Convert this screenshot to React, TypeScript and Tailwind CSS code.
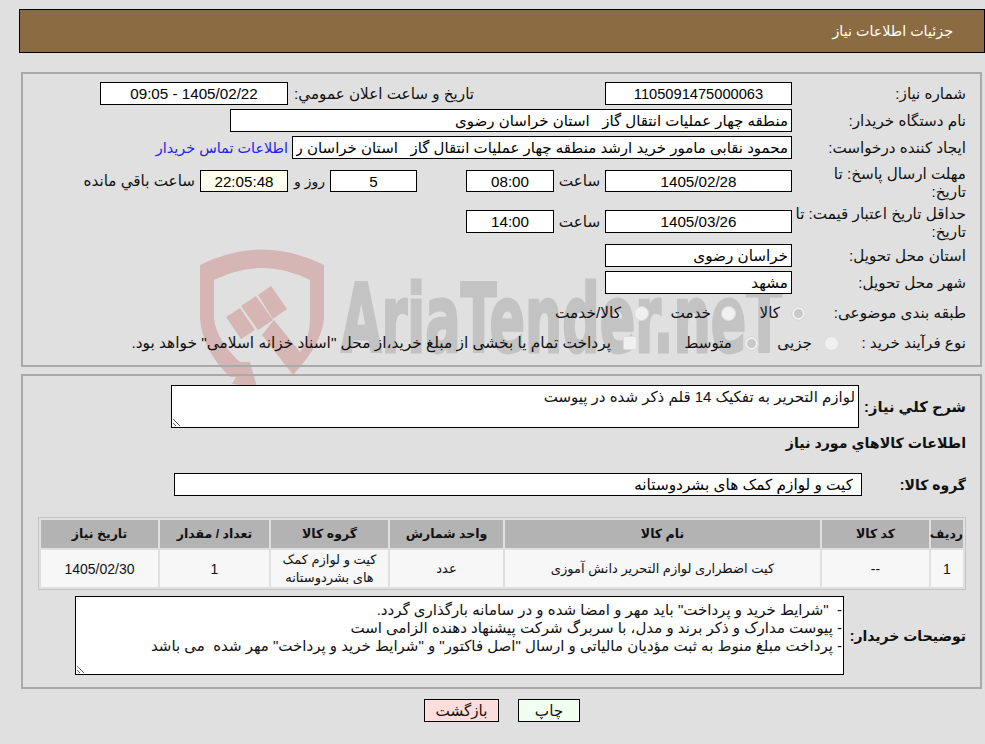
const inputCls = "h-[23px] border border-black bg-white px-[3px] text-black outline-none shrink-0";
const th = "bg-[#b3b3b3] h-[28px] p-0 text-center font-bold text-[12.5px]";
const td = "bg-[#f7f7f7] h-[37px] p-0 text-center leading-[18px] text-[13px]";
const tdNum = "bg-[#f7f7f7] h-[37px] p-0 text-center text-[14px]";

function Field({ value, className, center }: { value: string; className: string; center?: boolean }) {
  return <input readOnly value={value} className={`${inputCls} ${center ? "text-center" : "text-right"} ${className}`} />;
}

function Radio({ checked, className }: { checked?: boolean; className: string }) {
  return (
    <input
      type="radio"
      disabled
      checked={!!checked}
      readOnly
      className={`w-[15px] h-[15px] shrink-0 appearance-none rounded-full border border-[#dcdcdc] bg-[#f0f0f0] checked:bg-[#c9c9c9] checked:shadow-[inset_0_0_0_2px_#f0f0f0] ${className}`}
    />
  );
}

function Watermark() {
  return (
    <svg className="absolute left-0 top-0 pointer-events-none" width="985" height="744" viewBox="0 0 985 744">
      <g fill="#d6b5b5">
        <path
          fillRule="evenodd"
          d="M200 265 Q262 234 324 265 L324 318 Q322 344 293 375 L262 335 L274 320 L300 352 Q310 340 310 318 L310 280 Q262 256 214 280 L214 318 Q216 340 240 362 L250 362 L257 387 L232 384 L236 377 L230 377 Q202 350 200 318 Z"
        />
        <path d="M226 317 L240 308 L255 330 L241 339 Z" />
        <path d="M241 306 L256 296 L273 320 L258 330 Z" />
        <path d="M258 295 L271 286 L287 309 L273 319 Z" />
      </g>
      <text
        x="341"
        y="352"
        direction="ltr"
        textLength="441"
        lengthAdjust="spacingAndGlyphs"
        fill="#c3c3c3"
        stroke="#c3c3c3"
        strokeWidth="3"
        fontSize="95"
        fontWeight="700"
        fontFamily="DejaVu Sans, sans-serif"
      >
        AriaTender.neT
      </text>
    </svg>
  );
}

export default function App() {
  return (
    <div
      dir="rtl"
      className="relative w-[985px] h-[744px] overflow-hidden bg-[#e0e0e0] pt-[9px] text-[15.2px] leading-[18px] text-[#111] font-['Liberation_Sans','DejaVu_Sans',sans-serif]"
    >
      <Watermark />
      <div className="relative">
        <div className="ml-[19px] h-[44px] border border-black bg-[#8b6b42] pr-[31px] flex items-center text-white text-[14.3px]">
          جزئیات اطلاعات نیاز
        </div>

        <div className="ml-[21px] mr-[3px] mt-[19px] h-[295px] border-2 border-[#a9a9a9] pt-[8px] pr-[14px]">
          <div className="flex items-center h-[23px]">
            <div className="w-[174px] shrink-0">شماره نیاز:</div>
            <Field value="1105091475000063" center className="w-[187px] text-[14.67px]" />
            <div className="w-[186px] mr-[131px] shrink-0 whitespace-nowrap">تاريخ و ساعت اعلان عمومي:</div>
            <Field value="1405/02/22 - 09:05" center className="w-[188px]" />
          </div>
          <div className="flex items-center h-[23px] mt-[4px]">
            <div className="w-[174px] shrink-0">نام دستگاه خریدار:</div>
            <Field value="منطقه چهار عملیات انتقال گاز   استان خراسان رضوی" className="w-[562px] text-[15px]" />
          </div>
          <div className="flex items-center h-[23px] mt-[4px]">
            <div className="w-[174px] shrink-0">ایجاد کننده درخواست:</div>
            <Field value="محمود نقابی مامور خرید ارشد منطقه چهار عملیات انتقال گاز   استان خراسان رضوی" className="w-[500px] text-[15px]" />
            <a className="mr-[4px] text-[#2222ee] whitespace-nowrap text-[14.4px]">اطلاعات تماس خریدار</a>
          </div>
          <div className="flex items-center h-[22px] mt-[11px]">
            <div className="w-[174px] shrink-0 pl-[20px] pt-[3px]">مهلت ارسال پاسخ: تا تاریخ:</div>
            <Field value="1405/02/28" center className="w-[187px] !h-[22px]" />
            <div className="w-[51px] text-center shrink-0">ساعت</div>
            <Field value="08:00" center className="w-[88px] !h-[22px]" />
            <Field value="5" center className="w-[87px] mr-[49px] !h-[22px]" />
            <div className="w-[42px] pr-[5px] shrink-0 text-[14px]">روز و</div>
            <Field value="22:05:48" center className="w-[88px] !h-[22px] !bg-[#ffffee]" />
            <div className="mr-[5px] whitespace-nowrap">ساعت باقي مانده</div>
          </div>
          <div className="flex items-center h-[23px] mt-[18px]">
            <div className="w-[174px] shrink-0 pt-[3px]">حداقل تاریخ اعتبار قیمت: تا تاریخ:</div>
            <Field value="1405/03/26" center className="w-[187px]" />
            <div className="w-[51px] text-center shrink-0">ساعت</div>
            <Field value="14:00" center className="w-[88px]" />
          </div>
          <div className="flex items-center h-[23px] mt-[11px]">
            <div className="w-[174px] shrink-0">استان محل تحویل:</div>
            <Field value="خراسان رضوی" className="w-[187px] bg-white" />
          </div>
          <div className="flex items-center h-[23px] mt-[4px]">
            <div className="w-[174px] shrink-0">شهر محل تحویل:</div>
            <Field value="مشهد" className="w-[187px]" />
          </div>
          <div className="flex items-center mt-[8px] h-[22px]">
            <div className="w-[160px] shrink-0">طبقه بندی موضوعی:</div>
            <Radio checked className="" />
            <div className="w-[20px] mr-[11px] shrink-0 whitespace-nowrap">کالا</div>
            <Radio className="mr-[24px]" />
            <div className="w-[39px] mr-[10px] shrink-0 whitespace-nowrap">خدمت</div>
            <Radio className="mr-[23px]" />
            <div className="mr-[13px] whitespace-nowrap text-[15.4px]">کالا/خدمت</div>
          </div>
          <div className="flex items-center mt-[8px] h-[22px]">
            <div className="w-[127px] shrink-0">نوع فرآیند خرید :</div>
            <Radio className="" />
            <div className="w-[34px] mr-[12px] shrink-0 whitespace-nowrap">جزیی</div>
            <Radio checked className="mr-[19px]" />
            <div className="w-[44px] mr-[12px] shrink-0 whitespace-nowrap">متوسط</div>
            <span className="w-[14px] h-[14px] mr-[51px] rounded-[2px] border border-[#dcdcdc] bg-[#f0f0f0] shrink-0" />
            <div className="mr-[12px] whitespace-nowrap text-[15.4px]">پرداخت تمام یا بخشی از مبلغ خرید،از محل "اسناد خزانه اسلامی" خواهد بود.</div>
          </div>
        </div>

        <div className="ml-[21px] mr-[3px] mt-[7px] h-[315px] border-2 border-[#a9a9a9] pt-[9px] pr-[14px]">
          <div className="flex items-center">
            <div className="w-[107px] shrink-0 font-bold text-[14.67px]">شرح كلي نياز:</div>
            <textarea
              readOnly
              defaultValue="لوازم التحریر به تفکیک 14 قلم ذکر شده در پیوست"
              className="w-[688px] h-[43px] shrink-0 border border-black bg-white px-[3px] py-[2px] text-right text-[15px] outline-none"
            />
          </div>
          <div className="mt-[5px] h-[20px] flex items-center font-bold text-[14.2px]">اطلاعات كالاهاي مورد نياز</div>
          <div className="flex items-center mt-[20px]">
            <div className="w-[104px] shrink-0 font-bold text-[14px]">گروه کالا:</div>
            <Field value="کیت و لوازم کمک های بشردوستانه" className="w-[688px] !pr-[8px] text-[15.3px]" />
          </div>
          <table className="mt-[21px] w-[928px] table-fixed border-separate border-spacing-[2px] border border-[#c4c4c4]">
            <colgroup>
              <col className="w-[32px]" />
              <col className="w-[107px]" />
              <col className="w-[315px]" />
              <col className="w-[113px]" />
              <col className="w-[117px]" />
              <col className="w-[109px]" />
              <col className="w-[117px]" />
            </colgroup>
            <thead>
              <tr>
                <th className={th}>ردیف</th>
                <th className={th}>کد کالا</th>
                <th className={th}>نام کالا</th>
                <th className={th}>واحد شمارش</th>
                <th className={th}>گروه کالا</th>
                <th className={th}>تعداد / مقدار</th>
                <th className={th}>تاریخ نیاز</th>
              </tr>
            </thead>
            <tbody>
              <tr>
                <td className={tdNum}>1</td>
                <td className={tdNum}>--</td>
                <td className={td}>کیت اضطراری لوازم التحریر دانش آموزی</td>
                <td className={td}>عدد</td>
                <td className={td}>کیت و لوازم کمک های بشردوستانه</td>
                <td className={tdNum}>1</td>
                <td className={tdNum}>1405/02/30</td>
              </tr>
            </tbody>
          </table>
          <div className="flex items-center mt-[6px]">
            <div className="w-[122px] shrink-0 font-bold text-[14px]">توضیحات خریدار:</div>
            <textarea
              readOnly
              defaultValue={`-  "شرایط خرید و پرداخت" باید مهر و امضا شده و در سامانه بارگذاری گردد.\n- پیوست مدارک و ذکر برند و مدل، با سربرگ شرکت پیشنهاد دهنده الزامی است\n- پرداخت مبلغ منوط به ثبت مؤدیان مالیاتی و ارسال "اصل فاکتور" و "شرایط خرید و پرداخت" مهر شده  می باشد`}
              className="w-[769px] h-[79px] shrink-0 border border-black bg-white pl-[3px] pr-[1px] py-[4px] text-right text-[15px] outline-none"
            />
          </div>
        </div>

        <div className="flex mt-[10px] mr-[405px]">
          <button className="w-[62px] h-[23px] border border-black bg-[#f0fff0] text-center">چاپ</button>
          <button className="w-[75px] h-[23px] mr-[19px] border border-black bg-[#ffdddd] text-center">بازگشت</button>
        </div>
      </div>
    </div>
  );
}
